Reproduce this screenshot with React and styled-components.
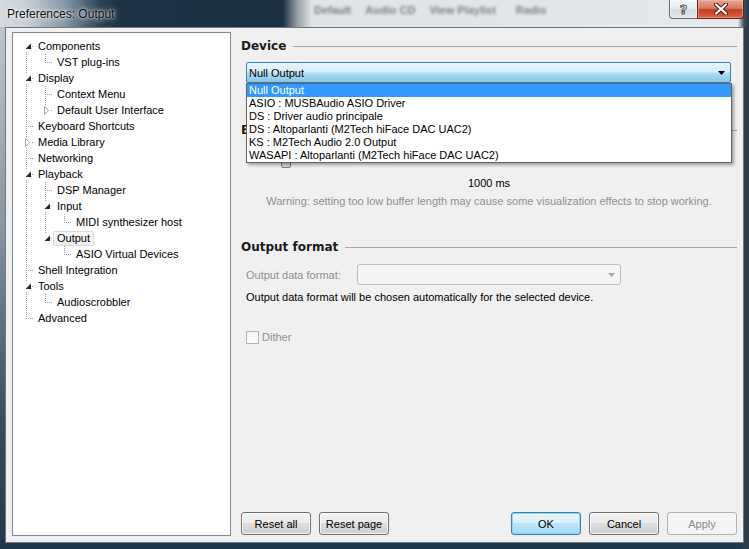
import React from 'react';
import styled, { createGlobalStyle, css } from 'styled-components';

const GlobalStyle = createGlobalStyle`
  body {
    margin: 0;
    font-family: "Liberation Sans", Arial, sans-serif;
    font-size: 11px;
    color: #000;
  }
`;

// flat tree, level + expander state
const TREE = [
  { label: 'Components', level: 0, exp: 'open' },
  { label: 'VST plug-ins', level: 1 },
  { label: 'Display', level: 0, exp: 'open' },
  { label: 'Context Menu', level: 1 },
  { label: 'Default User Interface', level: 1, exp: 'closed' },
  { label: 'Keyboard Shortcuts', level: 0 },
  { label: 'Media Library', level: 0, exp: 'closed' },
  { label: 'Networking', level: 0 },
  { label: 'Playback', level: 0, exp: 'open' },
  { label: 'DSP Manager', level: 1 },
  { label: 'Input', level: 1, exp: 'open' },
  { label: 'MIDI synthesizer host', level: 2 },
  { label: 'Output', level: 1, exp: 'open', selected: true },
  { label: 'ASIO Virtual Devices', level: 2 },
  { label: 'Shell Integration', level: 0 },
  { label: 'Tools', level: 0, exp: 'open' },
  { label: 'Audioscrobbler', level: 1 },
  { label: 'Advanced', level: 0 },
];

const DEVICES = [
  'Null Output',
  'ASIO : MUSBAudio ASIO Driver',
  'DS : Driver audio principale',
  'DS : Altoparlanti (M2Tech hiFace DAC UAC2)',
  'KS : M2Tech Audio 2.0 Output',
  'WASAPI : Altoparlanti (M2Tech hiFace DAC UAC2)',
];

// is there a later sibling at level k before the branch closes
const continues = (i, k) => {
  for (let j = i + 1; j < TREE.length; j++) {
    if (TREE[j].level < k) return false;
    if (TREE[j].level === k) return true;
  }
  return false;
};

const DOTS_V = 'repeating-linear-gradient(to bottom, #a0a0a0 0 1px, transparent 1px 2px)';
const DOTS_H = 'repeating-linear-gradient(to right, #a0a0a0 0 1px, transparent 1px 2px)';

/* ---------- window chrome ---------- */

const Window = styled.div`
  width: 749px;
  height: 549px;
  display: flex;
  flex-direction: column;
  overflow: hidden;
  background:
    linear-gradient(90deg, rgba(43, 59, 72, 0) 0 740px, #2b3b48 744px),
    linear-gradient(180deg, #c4ccd2 0%, #8a98a3 40%, #3b4f61 75%, #22364a 100%);
`;

const TitleBar = styled.div`
  height: 27px;
  flex: 0 0 27px;
  display: flex;
  align-items: flex-start;
  background: linear-gradient(90deg, #d5dbe0 0px, #c9d1d7 25px, #8797a3 65px, #2d4152 100px,
    #1e3243 120px, #1c2f3f 283px, #9aa4ab 298px, #e1e4e7 312px, #e6e9ec 738px, #3f4f5b 744px, #26384a 749px);
`;

const Caption = styled.div`
  flex: 0 0 300px;
  padding-left: 7px;
  line-height: 28px;
  font-family: "Liberation Sans", Arial, sans-serif;
  font-size: 12px;
  color: #111;
  text-shadow: 0 0 6px rgba(255, 255, 255, 0.9), 0 0 3px rgba(255, 255, 255, 0.9);
`;

const GhostTabs = styled.div`
  display: flex;
  gap: 14px;
  padding-left: 7px;
  padding-top: 4px;
`;

const Ghost = styled.span`
  font-size: 11px;
  font-weight: bold;
  color: #5e666c;
  filter: blur(1.4px);
  opacity: 0.8;
  margin-left: ${p => p.$gap || 0}px;
`;

const CaptionButtons = styled.div`
  margin-left: auto;
  margin-right: 5px;
  display: flex;
`;

const CapBtn = styled.div`
  height: 18px;
  display: flex;
  align-items: center;
  justify-content: center;
  border: 1px solid #5f6e7a;
  border-top: none;
  ${p => p.$close
    ? css`
      width: 45px;
      border-color: #6b2116;
      border-radius: 0 0 4px 0;
      background: linear-gradient(#e9a697 0%, #d97a63 45%, #c4391d 55%, #d6684b 100%);
      box-shadow: inset 0 0 0 1px rgba(255, 200, 180, 0.45);
    `
    : css`
      width: 27px;
      border-right: none;
      border-radius: 0 0 0 4px;
      background: linear-gradient(#f5f7f9 0%, #e6ebef 45%, #d3dbe1 55%, #dfe5ea 100%);
      box-shadow: inset 0 0 0 1px rgba(255, 255, 255, 0.6);
    `}
`;

const HelpGlyph = styled.span`
  font-family: "DejaVu Sans", sans-serif;
  font-size: 13px;
  font-weight: bold;
  color: #f4f4f4;
  -webkit-text-stroke: 1px #5a5a5a;
  line-height: 1;
`;

const Client = styled.div`
  flex: 1;
  margin: 0 5px 6px 5px;
  border: 1px solid #6b7884;
  background: #f0f0f0;
  padding: 4px 6px 6px 6px;
  display: flex;
  gap: 10px;
  min-height: 0;
`;

/* ---------- tree ---------- */

const TreePanel = styled.div`
  width: 219px;
  box-sizing: border-box;
  flex: 0 0 219px;
  background: #fff;
  border: 1px solid #828790;
  padding: 5px 0 0 4px;
`;

const Row = styled.div`
  display: flex;
  align-items: center;
  height: 16px;
`;

const Guide = styled.div`
  width: 19px;
  height: 16px;
  flex: 0 0 19px;
  background: ${p => (p.$line ? `${DOTS_V} 9px 0 / 1px 16px no-repeat` : 'none')};
`;

const Node = styled.div`
  position: relative;
  width: 17px;
  height: 16px;
  flex: 0 0 17px;
  background:
    ${p => (p.$up || p.$down
      ? `${DOTS_V} 9px ${p.$up ? 0 : 8}px / 1px ${(p.$up ? 8 : 0) + (p.$down ? 8 : 0)}px no-repeat,`
      : '')}
    ${DOTS_H} 9px 8px / 8px 1px no-repeat;
`;

const Expander = styled.svg`
  position: absolute;
  left: 6px;
  top: 3px;
`;

const NodeLabel = styled.span`
  display: inline-block;
  line-height: 13px;
  padding: 0 3px;
  border: 1px solid transparent;
  border-radius: 2px;
  white-space: nowrap;
  ${p => p.$selected && css`
    border-color: #d9d9d9;
    background: linear-gradient(#fafafa, #ececec);
  `}
`;

function TreeRow({ item, index }) {
  const guides = [];
  for (let k = 0; k < item.level; k++) {
    guides.push(<Guide key={k} $line={continues(index, k)} />);
  }
  return (
    <Row>
      {guides}
      <Node $up={index > 0} $down={continues(index, item.level)}>
        {item.exp === 'open' && (
          <Expander width="10" height="10" viewBox="0 0 10 10">
            <rect x="1" y="0" width="8" height="10" fill="#fff" />
            <polygon points="8,2.5 8,8 2.5,8" fill="#262626" />
          </Expander>
        )}
        {item.exp === 'closed' && (
          <Expander width="10" height="10" viewBox="0 0 10 10">
            <rect x="1" y="0" width="8" height="10" fill="#fff" />
            <polygon points="2.5,1.5 6.5,5.5 2.5,9.5" fill="#fff" stroke="#a6a6a6" strokeWidth="1" />
          </Expander>
        )}
      </Node>
      <NodeLabel $selected={item.selected}>{item.label}</NodeLabel>
    </Row>
  );
}

/* ---------- page ---------- */

const Pane = styled.div`
  flex: 1;
  display: flex;
  flex-direction: column;
  padding-top: 6px;
  min-width: 0;
`;

const Header = styled.div`
  display: flex;
  align-items: center;
  height: 16px;
  margin-top: ${p => p.$top || 0}px;
  font-family: "DejaVu Sans", Verdana, sans-serif;
  font-weight: bold;
  font-size: 12px;
  color: #1a1a1a;

  &::after {
    content: '';
    flex: 1;
    height: 1px;
    margin-left: 7px;
    background: #a7a7a7;
  }
`;

const ComboWrap = styled.div`
  position: relative;
  margin: 8px 6px 0 5px;
  z-index: 2;
`;

const Combo = styled.div`
  height: 21px;
  box-sizing: border-box;
  display: flex;
  align-items: center;
  padding: 0 5px 0 2px;
  border: 1px solid #3c7fb1;
  border-radius: 2px;
  background: linear-gradient(#e8f5fd 0%, #d6eefb 45%, #b0ddf5 55%, #82c6eb 100%);
`;

const ComboText = styled.span`
  flex: 1;
`;

const DropList = styled.div`
  position: absolute;
  left: 0;
  top: 100%;
  width: calc(100% + 1px);
  box-sizing: border-box;
  background: #fff;
  border: 1px solid #646464;
  box-shadow: 2px 2px 3px rgba(0, 0, 0, 0.35);
`;

const DropItem = styled.div`
  line-height: 13px;
  padding-left: 2px;
  white-space: nowrap;
  ${p => p.$active && css`
    background: #3399ff;
    color: #fff;
  `}
`;

const Slider = styled.div`
  position: relative;
  height: 22px;
  margin: 10px 6px 0 5px;
`;

const Track = styled.div`
  margin-top: 8px;
  height: 2px;
  border: 1px solid #b0b0b0;
  background: #e7eaea;
`;

const Thumb = styled.div`
  position: absolute;
  top: 1px;
  width: 10px;
  height: 19px;
  box-sizing: border-box;
  border: 1px solid #7b7b7b;
  border-radius: 2px;
  background: linear-gradient(#f5f5f5, #d9d9d9);
`;

const Centered = styled.div`
  text-align: center;
  line-height: 14px;
  margin-top: ${p => p.$top || 0}px;
  color: ${p => (p.$dim ? '#8f8f8f' : '#000')};
`;

const FieldRow = styled.div`
  display: flex;
  align-items: center;
  margin: 9px 0 0 5px;
`;

const FieldLabel = styled.span`
  width: 111px;
  color: #8f8f8f;
`;

const DisabledCombo = styled.div`
  width: 264px;
  height: 21px;
  box-sizing: border-box;
  display: flex;
  align-items: center;
  justify-content: flex-end;
  padding-right: 5px;
  border: 1px solid #bcbcbc;
  border-radius: 3px;
  background: #f4f4f4;
`;

const Note = styled.div`
  line-height: 14px;
  margin: 5px 0 0 5px;
`;

const CheckRow = styled.label`
  display: flex;
  align-items: center;
  gap: 3px;
  margin: 27px 0 0 5px;
  color: #8f8f8f;
  line-height: 13px;
`;

const CheckBox = styled.span`
  width: 13px;
  height: 13px;
  box-sizing: border-box;
  border: 1px solid #b5b5b5;
  background: linear-gradient(#f4f4f4, #fbfbfb);
`;

const ButtonBar = styled.div`
  margin-top: auto;
  margin-bottom: 1px;
  display: flex;
  gap: 8px;
`;

const Spacer = styled.div`
  flex: 1;
`;

const Button = styled.button`
  width: 70px;
  height: 23px;
  padding: 0;
  font: 11px "Liberation Sans", Arial, sans-serif;
  color: #000;
  border: 1px solid #707070;
  border-radius: 3px;
  background: linear-gradient(#f2f2f2 0%, #ebebeb 50%, #dddddd 50%, #cfcfcf 100%);
  box-shadow: inset 0 0 0 1px rgba(255, 255, 255, 0.75);
  ${p => p.$variant === 'default' && css`
    border-color: #3c7fb1;
    background: linear-gradient(#eaf6fd 0%, #d9f0fc 50%, #bee6fd 50%, #a7d9f5 100%);
    box-shadow: inset 0 0 0 1px #8fd3f7;
  `}
  ${p => p.$variant === 'disabled' && css`
    border-color: #adb2b5;
    background: #f4f4f4;
    color: #8a8a8a;
    box-shadow: none;
  `}
`;

const Arrow = ({ color }) => (
  <svg width="7" height="4" viewBox="0 0 7 4">
    <polygon points="0,0 7,0 3.5,4" fill={color} />
  </svg>
);

export default function App() {
  return (
    <>
      <GlobalStyle />
      <Window>
        <TitleBar>
          <Caption>Preferences: Output</Caption>
          <GhostTabs>
            <Ghost>Default</Ghost>
            <Ghost>Audio CD</Ghost>
            <Ghost>View Playlist</Ghost>
            <Ghost $gap={6}>Radio</Ghost>
          </GhostTabs>
          <CaptionButtons>
            <CapBtn>
              <HelpGlyph>?</HelpGlyph>
            </CapBtn>
            <CapBtn $close>
              <svg width="14" height="12" viewBox="0 0 14 12">
                <path d="M2 1.5 L12 10.5 M12 1.5 L2 10.5" stroke="#5a1c12" strokeWidth="4.2" strokeLinecap="round" />
                <path d="M2 1.5 L12 10.5 M12 1.5 L2 10.5" stroke="#fff" strokeWidth="2.2" strokeLinecap="round" />
              </svg>
            </CapBtn>
          </CaptionButtons>
        </TitleBar>

        <Client>
          <TreePanel>
            {TREE.map((item, i) => (
              <TreeRow key={item.label} item={item} index={i} />
            ))}
          </TreePanel>

          <Pane>
            <Header>Device</Header>
            <ComboWrap>
              <Combo>
                <ComboText>Null Output</ComboText>
                <Arrow color="#000" />
              </Combo>
              <DropList>
                {DEVICES.map((d, i) => (
                  <DropItem key={d} $active={i === 0}>{d}</DropItem>
                ))}
              </DropList>
            </ComboWrap>

            <Header $top={39}>Buffer length</Header>
            <Slider>
              <Track />
              <Thumb style={{ left: 35 }} />
            </Slider>
            <Centered $top={6}>1000 ms</Centered>
            <Centered $top={4} $dim>
              Warning: setting too low buffer length may cause some visualization effects to stop working.
            </Centered>

            <Header $top={31}>Output format</Header>
            <FieldRow>
              <FieldLabel>Output data format:</FieldLabel>
              <DisabledCombo>
                <Arrow color="#a8a8a8" />
              </DisabledCombo>
            </FieldRow>
            <Note>Output data format will be chosen automatically for the selected device.</Note>
            <CheckRow>
              <CheckBox />
              Dither
            </CheckRow>

            <ButtonBar>
              <Button>Reset all</Button>
              <Button>Reset page</Button>
              <Spacer />
              <Button $variant="default">OK</Button>
              <Button>Cancel</Button>
              <Button $variant="disabled">Apply</Button>
            </ButtonBar>
          </Pane>
        </Client>
      </Window>
    </>
  );
}
